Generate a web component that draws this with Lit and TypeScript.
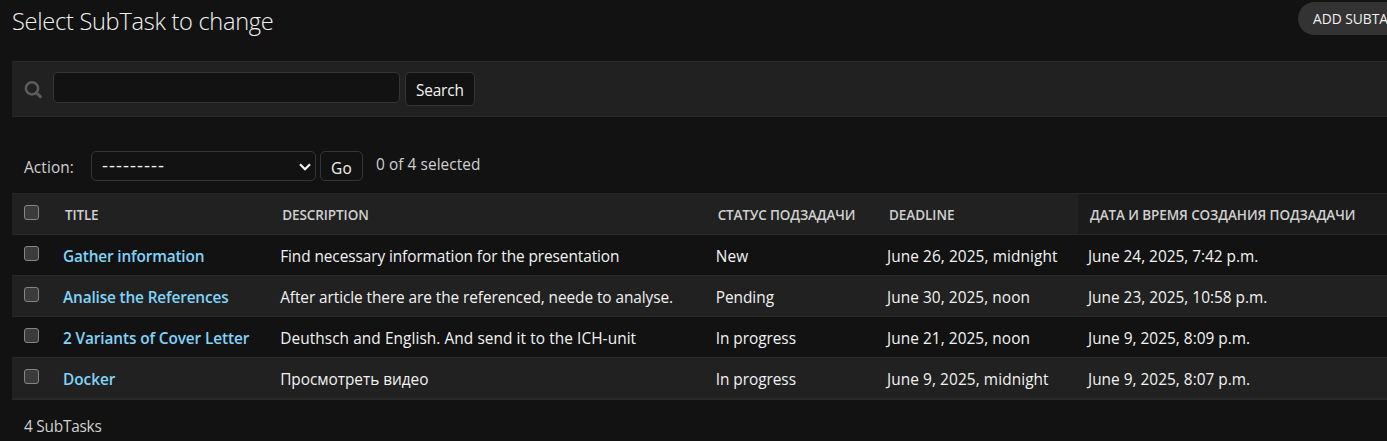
import { LitElement, html, css } from "lit";
import { customElement, property } from "lit/decorators.js";

/** Text that tracks its letters so the line takes a given width. */
@customElement("fit-text")
class FitText extends LitElement {
  @property({ type: Number }) width = 0;
  static styles = css`
    :host { display: inline-block; white-space: pre; }
  `;
  render() {
    return html`<slot></slot>`;
  }
  firstUpdated() {
    const natural = this.getBoundingClientRect().width;
    const count = (this.textContent ?? "").length;
    if (count && this.width) {
      this.style.letterSpacing = `${(this.width - natural) / count}px`;
    }
  }
}

type Cell = [string, number];

const HEADS: Cell[] = [
  ["TITLE", 33.5],
  ["DESCRIPTION", 86.5],
  ["СТАТУС ПОДЗАДАЧИ", 137.5],
  ["DEADLINE", 65.5],
  ["ДАТА И ВРЕМЯ СОЗДАНИЯ ПОДЗАДАЧИ", 265.3],
];

const ROWS: Cell[][] = [
  [["Gather information", 141.3], ["Find necessary information for the presentation", 339.2], ["New", 32.5], ["June 26, 2025, midnight", 170.5], ["June 24, 2025, 7:42 p.m.", 170.3]],
  [["Analise the References", 165.5], ["After article there are the referenced, neede to analyse.", 392.8], ["Pending", 58.3], ["June 30, 2025, noon", 143], ["June 23, 2025, 10:58 p.m.", 179.3]],
  [["2 Variants of Cover Letter", 186.2], ["Deuthsch and English. And send it to the ICH-unit", 356], ["In progress", 80.3], ["June 21, 2025, noon", 143], ["June 9, 2025, 8:09 p.m.", 162.2]],
  [["Docker", 52.3], ["Просмотреть видео", 148.2], ["In progress", 80.3], ["June 9, 2025, midnight", 161.7], ["June 9, 2025, 8:07 p.m.", 162.2]],
];

const t = ([text, width]: Cell) => html`<fit-text .width=${width}>${text}</fit-text>`;

@customElement("app-root")
class AppRoot extends LitElement {
  static styles = css`
    :host {
      display: block; height: 441px; overflow: hidden; box-sizing: border-box;
      padding-left: 12px; background: #121212; color: #f2f2f2;
      font: 15.4px/20px "Open Sans", "Noto Sans", sans-serif;
    }
    * { box-sizing: border-box; }
    .top { display: flex; justify-content: space-between; height: 61px; align-items: flex-start; }
    h1 { margin: 7px 0 0; font-size: 23.6px; line-height: 28px; font-weight: 300; }
    .add {
      flex: none; width: 89px; height: 33px; margin-top: 2px; padding-left: 15px;
      background: #333; border-radius: 17px 0 0 17px; font-size: 13.8px; line-height: 34px; white-space: nowrap;
    }
    .search {
      display: flex; align-items: flex-start; height: 56px; padding: 10px 12px;
      background: #212121; border: solid #282828; border-width: 1px 0;
    }
    .glass { width: 18px; height: 18px; margin: 9px 11px 0 0; }
    .field { width: 347px; height: 31px; margin-right: 5px; }
    .field, .btn, .select { border: 1px solid #353535; border-radius: 5px; background: #121212; }
    .btn { padding-left: 10px; line-height: 36px; }
    .find { width: 70px; height: 34px; }
    .actions { display: flex; height: 76px; padding: 34px 12px 0; color: #d0d0d0; }
    .label { width: 67px; line-height: 34px; }
    .select {
      display: flex; justify-content: space-between; width: 225px; height: 30px;
      margin-right: 4px; padding: 0 4px 0 10px; color: #f2f2f2; line-height: 29px;
    }
    .dashes { font-size: 18.5px; line-height: 26px; }
    .chev { width: 12px; height: 8px; margin-top: 11px; }
    .go { width: 43px; height: 30px; margin-right: 13px; line-height: 33px; color: #f2f2f2; }
    .count { line-height: 28px; }
    .row {
      display: grid; grid-template: 40px / 51px 217.2px 435.5px 171.3px 191px 1fr;
      height: 41px; border-top: 1px solid #282828; line-height: 44px; white-space: nowrap;
    }
    .row:nth-child(odd) { background: #212121; }
    .table { border-bottom: 2px solid #282828; }
    .head { font-size: 13.5px; line-height: 42px; font-weight: 600; color: #d0d0d0; }
    .head .cell { padding-left: 2px; }
    .head .sorted { background: #1b1b1b; padding-left: 12px; }
    .sorted { padding-left: 10px; }
    .link { color: #81d4fa; font-weight: 600; }
    .box {
      width: 15px; height: 15px; margin: 11px 0 0 12px;
      background: #3b3b3b; border: 1px solid #858585; border-radius: 3px;
    }
    .foot { padding: 17px 12px 0; color: #d0d0d0; }
  `;

  render() {
    return html`
      <div class="top">
        <h1>${t(["Select SubTask to change", 261.5])}</h1>
        <div class="add">${t(["ADD SUBTA", 75])}</div>
      </div>
      <div class="search">
        <svg class="glass" viewBox="0 0 18 18" fill="none" stroke="#5c5c5c">
          <circle cx="8" cy="7.4" r="6.1" stroke-width="2.5" />
          <path d="M12.3 11.8 16.4 15.7" stroke-width="3" stroke-linecap="round" />
        </svg>
        <div class="field"></div>
        <div class="btn find">${t(["Search", 47.7])}</div>
      </div>
      <div class="actions">
        <div class="label">${t(["Action:", 50])}</div>
        <div class="select">
          <div class="dashes">${t(["---------", 63])}</div>
          <svg class="chev" viewBox="0 0 12 8" fill="none" stroke="#f2f2f2" stroke-width="2.2">
            <path d="M1 1.2 6 6.2 11 1.2" />
          </svg>
        </div>
        <div class="btn go">${t(["Go", 21])}</div>
        <div class="count">${t(["0 of 4 selected", 104.5])}</div>
      </div>
      <div class="table">
        <div class="row head">
          <div class="box"></div>
          ${HEADS.map((c, i) => html`<div class="cell ${i === 4 ? "sorted" : ""}">${t(c)}</div>`)}
        </div>
        ${ROWS.map((r) => html`<div class="row">
          <div class="box"></div>
          ${r.map((c, i) => html`<div class="${i === 0 ? "link" : i === 4 ? "sorted" : ""}">${t(c)}</div>`)}
        </div>`)}
      </div>
      <div class="foot">${t(["4 SubTasks", 77.5])}</div>
    `;
  }
}
